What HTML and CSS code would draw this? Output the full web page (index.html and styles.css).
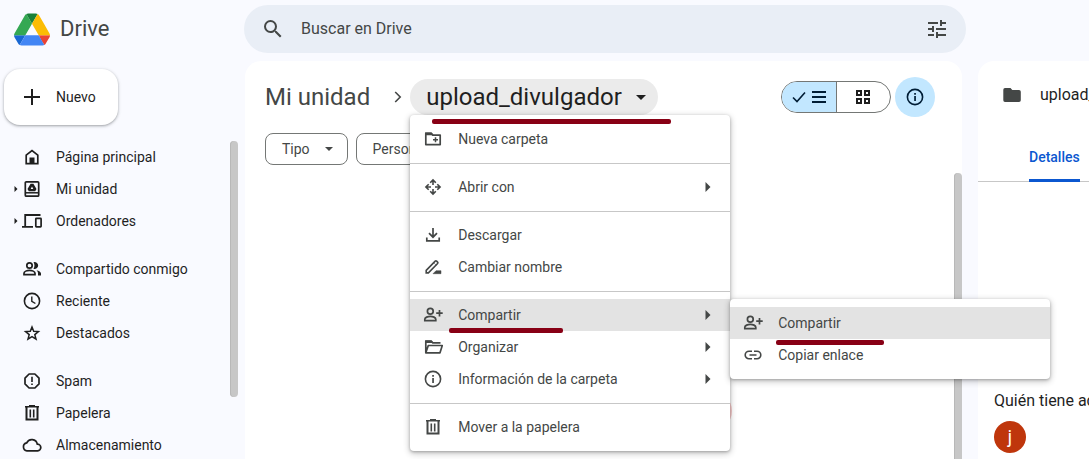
FILE: index.html
```html
<!DOCTYPE html>
<html lang="es">
<head>
<meta charset="utf-8">
<meta name="viewport" content="width=device-width, initial-scale=1">
<title>upload_divulgador - Drive</title>
<link rel="stylesheet" href="styles.css">
</head>
<body>
<svg class="sprite" aria-hidden="true">
  <symbol id="i-person-add" viewBox="0 0 20 20"><g fill="none" stroke="currentColor" stroke-width="1.7"><circle cx="7.3" cy="6.3" r="2.9"/><path d="M1.8 15.7v-1.4c0-1.8 3-3 5.5-3s5.500 1.200 5.500 3v1.400z"/><path d="M16.500 5v6.500M13.200 8.200h6.500"/></g></symbol>
  <symbol id="i-trash" viewBox="0 0 20 20"><path fill="none" stroke="currentColor" stroke-width="2" d="M4.500 4v12.500h11V4"/><path fill="none" stroke="currentColor" stroke-width="1.600" d="M3 3.800h14M7 2.800h6M8.300 6.500v8M11.700 6.500v8"/></symbol>
  <symbol id="i-info" viewBox="0 0 20 20"><circle cx="10" cy="10" r="7.600" fill="none" stroke="currentColor" stroke-width="1.600"/><path d="M9.200 9h1.700v5H9.200zM9.200 6h1.700v1.700H9.200z" fill="currentColor"/></symbol>
  <symbol id="i-right" viewBox="0 0 6 10"><path d="M.5 0l5 5-5 5z" fill="currentColor"/></symbol>
  <symbol id="i-down" viewBox="0 0 10 5"><path d="M0 0h10L5 5z" fill="currentColor"/></symbol>
</svg>
<div class="app">
  <header class="topbar">
    <a class="brand" href="#">
      <svg class="logo" viewBox="0 0 87.3 78" aria-hidden="true">
        <path fill="#1967d2" d="m6.600 66.850 3.850 6.650c.8 1.400 1.950 2.500 3.300 3.300l13.750-23.800H0c0 1.550.4 3.100 1.200 4.500z"/>
        <path fill="#34a853" d="M43.650 25 29.900 1.200c-1.350.8-2.500 1.900-3.300 3.300L1.200 48.500A9.060 9.060 0 0 0 0 53h27.500z"/>
        <path fill="#ea4335" d="M73.550 76.800c1.350-.8 2.500-1.900 3.300-3.300l1.600-2.750 7.650-13.250c.8-1.400 1.200-2.950 1.200-4.500H59.800l5.850 11.500z"/>
        <path fill="#188038" d="M43.650 25 57.400 1.200C56.050.4 54.500 0 52.900 0H34.400c-1.600 0-3.150.45-4.500 1.200z"/>
        <path fill="#4285f4" d="M59.800 53H27.500L13.750 76.800c1.350.8 2.900 1.200 4.500 1.200h50.800c1.600 0 3.150-.45 4.500-1.200z"/>
        <path fill="#fbbc04" d="m73.400 26.500-12.700-22c-.8-1.400-1.950-2.500-3.300-3.300L43.650 25 59.800 53h27.450c0-1.550-.4-3.100-1.200-4.500z"/>
      </svg>
      <span>Drive</span>
    </a>
    <form class="search" role="search">
      <button class="icon-btn" type="button" aria-label="Buscar"><svg class="ic24" viewBox="0 0 24 24"><path fill="currentColor" d="M15.500 14h-.79l-.28-.27A6.470 6.470 0 0 0 16 9.500 6.500 6.500 0 1 0 9.500 16c1.610 0 3.090-.59 4.230-1.570l.27.28v.79l5 4.990L20.490 19l-4.990-5zm-6 0C7.010 14 5 11.990 5 9.500S7.010 5 9.500 5 14 7.010 14 9.500 11.990 14 9.500 14z"/></svg></button>
      <input class="search-input" type="search" placeholder="Buscar en Drive" aria-label="Buscar en Drive">
      <button class="icon-btn" type="button" aria-label="Búsqueda avanzada"><svg class="ic24" viewBox="0 0 24 24"><path fill="currentColor" d="M3 17v2h6v-2H3zM3 5v2h10V5H3zm10 16v-2h8v-2h-8v-2h-2v6h2zM7 9v2H3v2h4v2h2V9H7zm14 4v-2H11v2h10zm-6-4h2V7h4V5h-4V3h-2v6z"/></svg></button>
    </form>
  </header>

  <aside class="sidebar">
    <button class="new-btn" type="button"><svg class="plus" viewBox="0 0 16 16" aria-hidden="true"><path d="M7 0h2v7h7v2H9v7H7V9H0V7h7z" fill="currentColor"/></svg>Nuevo</button>
    <div class="nav-wrap">
      <nav class="nav">
        <ul class="nav-group">
          <li><a class="nav-item" href="#"><span class="twist"></span><svg class="ic" viewBox="0 0 20 20"><path d="M4.200 16.700V8.100L10 3.600l5.800 4.500v8.600z" fill="none" stroke="currentColor" stroke-width="1.700"/><path d="M7.500 10.500h5v6h-5z" fill="currentColor"/></svg>Página principal</a></li>
          <li><a class="nav-item" href="#"><span class="twist"><svg class="twist-ic"><use href="#i-right"/></svg></span><svg class="ic" viewBox="0 0 20 20"><rect x="3.300" y="2.800" width="13.400" height="14.400" rx="1" fill="none" stroke="currentColor" stroke-width="1.700"/><path d="M3 13.800h14" stroke="currentColor" stroke-width="1.500"/><path d="M8.600 4.800h2.800l3.100 5.200-1.300 2.200H6.800L5.500 10zM10 7.600L8.700 10h2.600z" fill="currentColor" fill-rule="evenodd"/></svg>Mi unidad</a></li>
          <li><a class="nav-item" href="#"><span class="twist"><svg class="twist-ic"><use href="#i-right"/></svg></span><svg class="ic" viewBox="0 0 20 20"><path d="M18.500 4H3.200v11.500M0 15.800h11" fill="none" stroke="currentColor" stroke-width="1.800"/><rect x="13.800" y="7.300" width="5.300" height="8.500" rx=".6" fill="none" stroke="currentColor" stroke-width="1.700"/></svg>Ordenadores</a></li>
        </ul>
        <ul class="nav-group">
          <li><a class="nav-item" href="#"><span class="twist"></span><svg class="ic" viewBox="0 0 20 20"><g fill="none" stroke="currentColor" stroke-width="1.700"><circle cx="7.500" cy="6.500" r="2.700"/><path d="M2 15.600v-1.300c0-1.800 3-2.900 5.500-2.900s5.500 1.100 5.500 2.900v1.300z"/></g><path d="M11.500 3.200a3.500 3.500 0 1 1 0 6.600c1.300-2 1.300-4.600 0-6.600zM14.500 11.200c2.500.5 4.500 1.600 4.500 3.300v2h-3v-2c0-1.300-.5-2.400-1.500-3.300z" fill="currentColor"/></svg>Compartido conmigo</a></li>
          <li><a class="nav-item" href="#"><span class="twist"></span><svg class="ic" viewBox="0 0 20 20"><circle cx="10" cy="10" r="7.600" fill="none" stroke="currentColor" stroke-width="1.600"/><path d="M9.800 5.500v4.800l3.600 2.200" fill="none" stroke="currentColor" stroke-width="1.400"/></svg>Reciente</a></li>
          <li><a class="nav-item" href="#"><span class="twist"></span><svg class="ic" viewBox="0 0 20 20"><path d="M10 4l1.700 4.300 4.700.3-3.600 3 1.200 4.500L10 13.600l-4 2.500 1.200-4.500-3.600-3 4.700-.3z" fill="none" stroke="currentColor" stroke-width="1.500"/></svg>Destacados</a></li>
        </ul>
        <ul class="nav-group">
          <li><a class="nav-item" href="#"><span class="twist"></span><svg class="ic" viewBox="0 0 20 20"><path d="M7.100 3h5.800L17 7.100v5.800L12.900 17H7.100L3 12.900V7.100z" fill="none" stroke="currentColor" stroke-width="1.700" stroke-linejoin="round"/><path d="M9.200 5.700h1.600v5.200H9.200zM9.200 12.400h1.600V14H9.200z" fill="currentColor"/></svg>Spam</a></li>
          <li><a class="nav-item" href="#"><span class="twist"></span><svg class="ic"><use href="#i-trash"/></svg>Papelera</a></li>
          <li><a class="nav-item" href="#"><span class="twist"></span><svg class="ic" viewBox="0 0 20 20"><path d="M5 15.800a4 4 0 0 1-.3-7.900 5.600 5.600 0 0 1 10.600 1.300 3.300 3.300 0 0 1 .4 6.600z" fill="none" stroke="currentColor" stroke-width="1.700"/></svg>Almacenamiento</a></li>
        </ul>
      </nav>
      <div class="bar nav-bar"></div>
    </div>
  </aside>

  <main class="content">
    <div class="heading">
      <div class="crumbs">
        <a class="crumb" href="#">Mi unidad</a>
        <svg class="chev" viewBox="0 0 8 12" aria-hidden="true"><path d="M1.200 1l5 5-5 5" fill="none" stroke="currentColor" stroke-width="1.600"/></svg>
        <div class="crumb-menu">
          <button class="crumb-btn" type="button" aria-expanded="true">upload_divulgador<svg class="down"><use href="#i-down"/></svg></button>
          <div class="menu" role="menu">
            <span class="mark mark-title"></span>
            <button class="mi" type="button" role="menuitem"><svg class="ic" viewBox="0 0 20 20"><path d="M2.800 4.300h5.500l1.500 1.800h7.400v9.500H2.800z" fill="none" stroke="currentColor" stroke-width="1.700" stroke-linejoin="round"/><path d="M2 3.500h6.500l2 2.800H2z" fill="currentColor"/><path d="M12.500 8.300v5M10 10.800h5" stroke="currentColor" stroke-width="1.500"/></svg><span>Nueva carpeta</span></button>
            <hr class="sep">
            <button class="mi" type="button" role="menuitem"><svg class="ic" viewBox="0 0 20 20"><g fill="none" stroke="currentColor" stroke-width="1.600"><path d="M7.200 5.700L10 2.900l2.800 2.800M7.200 14.300l2.800 2.800 2.800-2.800M5.700 7.200L2.900 10l2.800 2.800M14.300 7.200l2.800 2.800-2.800 2.800M10 3v5M10 12v5M3 10h5M12 10h5"/></g></svg><span>Abrir con</span><svg class="go"><use href="#i-right"/></svg></button>
            <hr class="sep">
            <button class="mi" type="button" role="menuitem"><svg class="ic" viewBox="0 0 20 20"><path d="M10 3v9M6 8.200l4 4 4-4M3.800 12.500v3.300h12.400v-3.300" fill="none" stroke="currentColor" stroke-width="1.700"/></svg><span>Descargar</span></button>
            <button class="mi" type="button" role="menuitem"><svg class="ic" viewBox="0 0 20 20"><path d="M3.200 15.900v-2.500l9-9.300a1 1 0 0 1 1.400 0l1 1a1 1 0 0 1 0 1.400l-9.200 9.400z" fill="none" stroke="currentColor" stroke-width="1.600"/><path d="M10.500 5.500l3 3M13 13.700h5v3h-8z" fill="currentColor" stroke="currentColor" stroke-width=".5"/></svg><span>Cambiar nombre</span></button>
            <hr class="sep">
            <div class="sub-anchor">
              <button class="mi on" type="button" role="menuitem" aria-expanded="true"><svg class="ic"><use href="#i-person-add"/></svg><span>Compartir</span><svg class="go"><use href="#i-right"/></svg></button>
              <span class="mark mark-share"></span>
              <div class="menu submenu" role="menu">
                <button class="mi on" type="button" role="menuitem"><svg class="ic"><use href="#i-person-add"/></svg><span>Compartir</span></button>
                <button class="mi" type="button" role="menuitem"><svg class="ic" viewBox="0 0 20 20"><path d="M9 6.200H6a3.800 3.800 0 0 0 0 7.600h3M11 6.200h3a3.800 3.800 0 0 1 0 7.600h-3M6.500 10h7" fill="none" stroke="currentColor" stroke-width="1.600"/></svg><span>Copiar enlace</span></button>
                <span class="mark mark-sub"></span>
              </div>
            </div>
            <button class="mi" type="button" role="menuitem"><svg class="ic" viewBox="0 0 20 20"><path d="M2.800 15.800V4.200h5.400l1.600 1.700h7.700M2.800 15.800L5.300 8.500h14l-2.300 7.300z" fill="none" stroke="currentColor" stroke-width="1.700" stroke-linejoin="round"/><path d="M2 3.400h6.500l2 2.600H2z" fill="currentColor"/></svg><span>Organizar</span><svg class="go"><use href="#i-right"/></svg></button>
            <button class="mi" type="button" role="menuitem"><svg class="ic"><use href="#i-info"/></svg><span>Información de la carpeta</span><svg class="go"><use href="#i-right"/></svg></button>
            <hr class="sep">
            <button class="mi" type="button" role="menuitem"><svg class="ic"><use href="#i-trash"/></svg><span>Mover a la papelera</span></button>
          </div>
        </div>
      </div>
      <div class="tools">
        <div class="toggle">
          <button class="tg tg-on" type="button" aria-label="Vista de lista" aria-pressed="true"><svg class="check" viewBox="0 0 14 12"><path d="M1 6.500l4 4L13 1.500" fill="none" stroke="currentColor" stroke-width="1.600"/></svg><svg class="lines" viewBox="0 0 14 12"><path d="M0 1h14M0 6h14M0 11h14" stroke="currentColor" stroke-width="2"/></svg></button>
          <button class="tg" type="button" aria-label="Vista de cuadrícula" aria-pressed="false"><svg class="grid-ic" viewBox="0 0 14 14"><path d="M1 1h4v4H1zM9 1h4v4H9zM1 9h4v4H1zM9 9h4v4H9z" fill="none" stroke="currentColor" stroke-width="2"/></svg></button>
        </div>
        <button class="info-btn" type="button" aria-label="Ver detalles"><svg class="ic"><use href="#i-info"/></svg></button>
      </div>
    </div>
    <div class="chips">
      <button class="chip" type="button">Tipo<svg class="chip-down"><use href="#i-down"/></svg></button>
      <button class="chip" type="button">Personas<svg class="chip-down"><use href="#i-down"/></svg></button>
    </div>
    <div class="list"><span class="blob"></span><div class="bar list-bar"></div></div>
  </main>

  <section class="details">
    <h2 class="d-title"><svg class="ic" viewBox="0 0 20 20" aria-hidden="true"><path d="M3 3h5.500l1.800 2H17q1.800 0 1.800 1.700v8.600Q18.800 17 17 17H3q-1.700 0-1.700-1.700V4.700Q1.300 3 3 3z" fill="currentColor"/></svg>upload_divulgador</h2>
    <div class="tabs" role="tablist"><button class="tab" type="button" role="tab" aria-selected="true">Detalles</button></div>
    <h3 class="d-sub">Quién tiene acceso</h3>
    <span class="avatar">j</span>
  </section>
</div>
</body>
</html>
```
FILE: styles.css
```css
* { box-sizing: border-box; }
body {
  margin: 0;
  background: #f9faff;
  color: #1f1f1f;
  font: 400 14px/20px Roboto, "Liberation Sans", sans-serif;
}
button { font: inherit; color: inherit; background: none; border: 0; padding: 0; }
a { color: inherit; text-decoration: none; }
svg { display: block; flex: none; }
.sprite { position: absolute; width: 0; height: 0; }
.ic { width: 20px; height: 20px; }
.ic24 { width: 24px; height: 24px; }
.bar { width: 8px; background: #c7c7c7; box-shadow: inset 1px 0 #b8b8b8; }

.app {
  display: grid;
  grid-template-columns: 229px minmax(0, 1fr) 111px;
  grid-template-rows: 61px minmax(0, 1fr);
  column-gap: 16px;
  height: 100vh;
  overflow: hidden;
}

.topbar { grid-column: 1 / -1; display: flex; align-items: flex-start; padding: 5px 123px 0 14px; }
.brand { display: flex; align-items: center; gap: 10px; width: 230px; height: 48px; font-size: 22px; color: #444746; }
.logo { width: 36px; height: 33px; }
.search { flex: 1; display: flex; align-items: center; height: 48px; padding: 0 17px; border-radius: 24px; background: #e9eef6; }
.icon-btn { color: #444746; }
.search-input {
  flex: 1; min-width: 0; margin: 0 16px; padding: 0; border: 0; background: none;
  font: 400 16px/24px Roboto, "Liberation Sans", sans-serif; color: #1f1f1f;
}
.search-input::placeholder { color: #444746; opacity: 1; }

.sidebar { display: flex; flex-direction: column; align-items: flex-start; min-height: 0; padding-top: 8px; margin-right: -9px; }
.new-btn {
  display: flex; align-items: center; gap: 16px; flex: none; height: 56px; margin-left: 4px; padding: 0 22px 0 20px;
  border-radius: 16px; background: #fff;
  box-shadow: 0 1px 2px rgba(60, 64, 67, .3), 0 1px 3px 1px rgba(60, 64, 67, .15);
}
.plus { width: 16px; height: 16px; }
.nav-wrap { display: flex; justify-content: space-between; width: 100%; min-height: 0; padding-top: 16px; }
.nav { display: flex; flex-direction: column; gap: 16px; }
.nav-group { list-style: none; margin: 0; padding: 0; }
.nav-item { display: flex; align-items: center; height: 32px; padding-left: 12px; }
.nav-item .ic { margin-right: 14px; }
.twist { width: 10px; padding-left: 2px; }
.twist-ic { width: 4px; height: 6px; }
.nav-bar { height: 256px; border-radius: 4px; }

.content { display: flex; flex-direction: column; background: #fff; border-radius: 16px 16px 0 0; padding: 16px 0 0; min-height: 0; }
.heading { display: flex; align-items: center; justify-content: space-between; height: 40px; padding: 0 27px 0 20px; }
.crumbs { display: flex; align-items: center; font-size: 24px; line-height: 36px; color: #444746; }
.chev { width: 8px; height: 12px; margin: 0 8px 0 24px; }
.crumb-menu { position: relative; }
.crumb-btn { display: flex; align-items: center; justify-content: space-between; min-width: 248px; height: 36px; padding: 0 12px 0 16px; border-radius: 18px; background: #ebebeb; color: #1f1f1f; }
.down { width: 10px; height: 5px; }

.menu {
  position: absolute; z-index: 2; top: 36px; left: 0; width: 320px; padding: 8px 0;
  border-radius: 4px; background: #fff; color: #444746; font-size: 14px; line-height: 20px;
  box-shadow: 0 2px 6px 1px rgba(0, 0, 0, .2), 0 1px 3px rgba(0, 0, 0, .25);
}
.mi { display: flex; align-items: center; gap: 15px; width: 100%; height: 32px; padding: 0 19px 0 13px; text-align: left; }
.mi span { flex: 1; }
.on { background: #e3e3e3; }
.go { width: 6px; height: 10px; }
.sep { height: 1px; margin: 8px 0 7px; border: 0; background: #c7c7c7; }
.sub-anchor { position: relative; }
.submenu { top: 0; left: 320px; }
.mark { position: absolute; z-index: 1; height: 5px; border-radius: 2px; background: #880015; }
.mark-title { top: 4px; left: 22px; width: 239px; }
.mark-share { top: 29px; left: 39px; width: 114px; }
.mark-sub { top: 41px; left: 46px; width: 108px; }

.tools { display: flex; align-items: center; gap: 4px; }
.toggle { display: flex; width: 110px; height: 32px; border: 1px solid #747775; border-radius: 16px; overflow: hidden; }
.tg { flex: 1; display: flex; align-items: center; justify-content: center; gap: 6px; }
.tg-on { background: #c2e7ff; color: #001d35; border-right: 1px solid #747775; }
.check { width: 14px; height: 12px; }
.lines { width: 14px; height: 12px; }
.grid-ic { width: 14px; height: 14px; }
.info-btn { display: grid; place-items: center; width: 40px; height: 40px; border-radius: 50%; background: #c2e7ff; color: #001d35; }

.chips { display: flex; gap: 8px; padding: 16px 20px 8px; }
.chip { display: flex; align-items: center; gap: 15px; height: 32px; padding: 0 14px 0 16px; border: 1px solid #747775; border-radius: 8px; color: #444746; }
.chip-down { width: 8px; height: 4px; }
.list { position: relative; flex: 1; display: flex; justify-content: flex-end; }
.list-bar { border-radius: 4px 4px 0 0; }
.blob { position: absolute; top: 218px; left: 447px; width: 40px; height: 40px; border-radius: 50%; background: #f6caca; }

.details { background: #fff; border-radius: 16px 0 0; overflow: hidden; white-space: nowrap; }
.d-title { display: flex; align-items: center; gap: 18px; margin: 0; padding: 22px 0 0 24px; font-size: 16px; font-weight: 400; line-height: 24px; }
.d-title .ic { color: #444746; }
.tabs { display: flex; height: 50px; margin-top: 25px; padding-left: 51px; border-bottom: 1px solid #c7c7c7; }
.tab { height: 50px; padding-top: 2px; color: #0b57d0; font-weight: 500; border-bottom: 3px solid #0b57d0; }
.d-sub { margin: 207px 0 8px; padding-left: 16px; font-size: 16px; font-weight: 400; line-height: 24px; }
.avatar { display: grid; place-items: center; width: 32px; height: 32px; margin-left: 16px; border-radius: 50%; background: #bf360c; color: #fff; font-size: 18px; }
```
